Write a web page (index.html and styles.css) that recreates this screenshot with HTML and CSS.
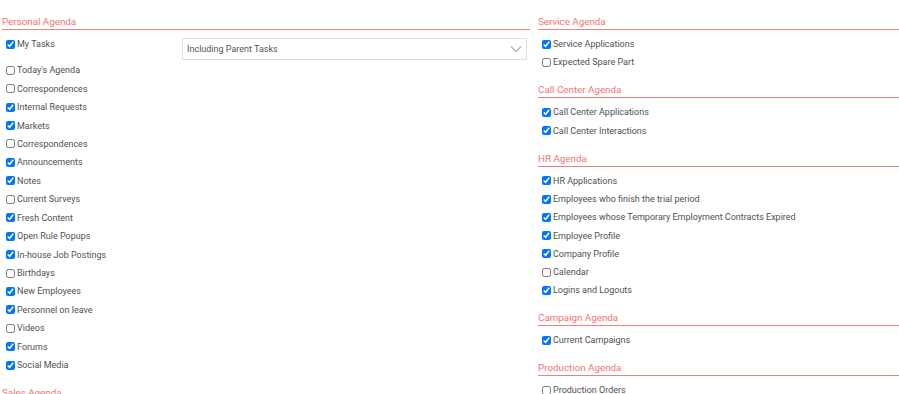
FILE: index.html
```html
<!DOCTYPE html>
<html lang="en">
<head>
<meta charset="utf-8">
<title>Agenda Settings</title>
<link rel="stylesheet" href="styles.css">
</head>
<body>
<div class="page">
  <div class="col">
    <section class="section">
      <h3 class="sec-title">Personal Agenda</h3>
      <div class="list">
        <div class="row-select">
          <label class="item item-fixed"><input type="checkbox" checked>My Tasks</label>
          <div class="select">
            <span>Including Parent Tasks</span>
            <svg class="chev" width="12" height="8" viewBox="0 0 12 8"><path d="M1 1.5 L6 6.5 L11 1.5" fill="none" stroke="#b5b5b5" stroke-width="1.3"/></svg>
          </div>
        </div>
        <label class="item"><input type="checkbox">Today's Agenda</label>
        <label class="item"><input type="checkbox">Correspondences</label>
        <label class="item"><input type="checkbox" checked>Internal Requests</label>
        <label class="item"><input type="checkbox" checked>Markets</label>
        <label class="item"><input type="checkbox">Correspondences</label>
        <label class="item"><input type="checkbox" checked>Announcements</label>
        <label class="item"><input type="checkbox" checked>Notes</label>
        <label class="item"><input type="checkbox">Current Surveys</label>
        <label class="item"><input type="checkbox" checked>Fresh Content</label>
        <label class="item"><input type="checkbox" checked>Open Rule Popups</label>
        <label class="item"><input type="checkbox" checked>In-house Job Postings</label>
        <label class="item"><input type="checkbox">Birthdays</label>
        <label class="item"><input type="checkbox" checked>New Employees</label>
        <label class="item"><input type="checkbox" checked>Personnel on leave</label>
        <label class="item"><input type="checkbox">Videos</label>
        <label class="item"><input type="checkbox" checked>Forums</label>
        <label class="item"><input type="checkbox" checked>Social Media</label>
      </div>
    </section>
    <section class="section">
      <h3 class="sec-title">Sales Agenda</h3>
    </section>
  </div>
  <div class="col col-right">
    <section class="section">
      <h3 class="sec-title">Service Agenda</h3>
      <div class="list">
        <label class="item"><input type="checkbox" checked>Service Applications</label>
        <label class="item"><input type="checkbox">Expected Spare Part</label>
      </div>
    </section>
    <section class="section">
      <h3 class="sec-title">Call Center Agenda</h3>
      <div class="list">
        <label class="item"><input type="checkbox" checked>Call Center Applications</label>
        <label class="item"><input type="checkbox" checked>Call Center Interactions</label>
      </div>
    </section>
    <section class="section">
      <h3 class="sec-title">HR Agenda</h3>
      <div class="list">
        <label class="item"><input type="checkbox" checked>HR Applications</label>
        <label class="item"><input type="checkbox" checked>Employees who finish the trial period</label>
        <label class="item"><input type="checkbox" checked>Employees whose Temporary Employment Contracts Expired</label>
        <label class="item"><input type="checkbox" checked>Employee Profile</label>
        <label class="item"><input type="checkbox" checked>Company Profile</label>
        <label class="item"><input type="checkbox">Calendar</label>
        <label class="item"><input type="checkbox" checked>Logins and Logouts</label>
      </div>
    </section>
    <section class="section">
      <h3 class="sec-title">Campaign Agenda</h3>
      <div class="list">
        <label class="item"><input type="checkbox" checked>Current Campaigns</label>
      </div>
    </section>
    <section class="section">
      <h3 class="sec-title">Production Agenda</h3>
      <div class="list">
        <label class="item"><input type="checkbox">Production Orders</label>
      </div>
    </section>
  </div>
</div>
</body>
</html>
```
FILE: styles.css
```css
html, body {
  margin: 0;
  padding: 0;
  background: #fff;
}
body {
  font-family: Roboto, "Liberation Sans", Arial, sans-serif;
  color: #505050;
  overflow: hidden;
}
.page {
  display: grid;
  grid-template-columns: 528px 1fr;
  column-gap: 8px;
  padding: 14px 0 0 2px;
}
.section {
  margin-bottom: 10.7px;
}
.sec-title {
  margin: 0;
  font-weight: 400;
  font-size: 9.8px;
  line-height: 14px;
  padding-top: 1px;
  height: 14px;
  color: #f07575;
  border-bottom: 1px solid #ee8080;
}
.list {
  padding-top: 5px;
}
.item {
  display: flex;
  align-items: center;
  height: 18.44px;
  font-size: 9px;
  color: #505050;
  white-space: nowrap;
}
.col-right .item {
  height: 18.3px;
}
.item input {
  width: 9px;
  height: 9px;
  margin: 0 2px 0 4px;
  flex: none;
}
.row-select {
  display: flex;
  align-items: flex-start;
  height: 26px;
}
.item-fixed {
  width: 180px;
  flex: none;
}
.select {
  margin-top: 3.2px;
  flex: 1;
  margin-right: 3px;
  height: 22px;
  box-sizing: border-box;
  border: 1px solid #dcdcdc;
  display: flex;
  align-items: center;
  justify-content: space-between;
  padding: 0 4px 0 4px;
  font-size: 9px;
  color: #555;
}
.chev {
  display: block;
}
```
